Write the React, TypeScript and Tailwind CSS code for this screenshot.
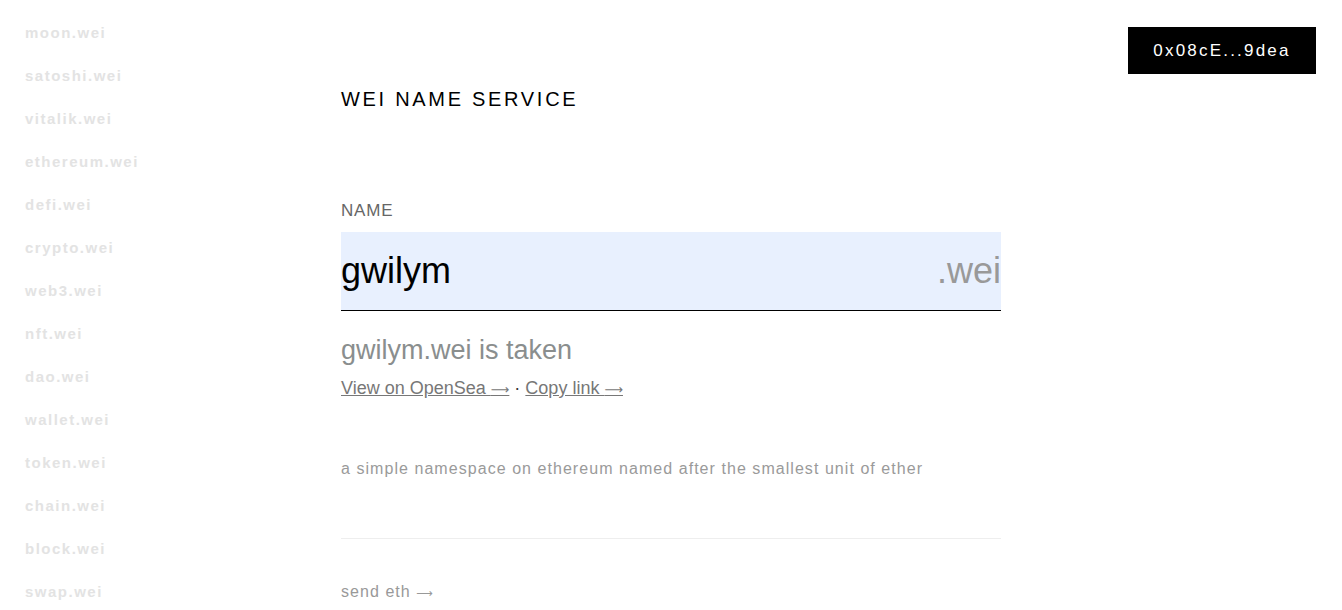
import React from "react";

const names = [
  "moon.wei",
  "satoshi.wei",
  "vitalik.wei",
  "ethereum.wei",
  "defi.wei",
  "crypto.wei",
  "web3.wei",
  "nft.wei",
  "dao.wei",
  "wallet.wei",
  "token.wei",
  "chain.wei",
  "block.wei",
  "swap.wei",
];

function Arrow() {
  return (
    <span
      className="text-[0.72em]"
      style={{ fontFamily: '"DejaVu Sans", sans-serif' }}
    >
      ⟶
    </span>
  );
}

export default function App() {
  return (
    <div
      className="relative flex h-[610px] w-full overflow-hidden bg-white"
      style={{ fontFamily: '"Liberation Sans", Arial, sans-serif' }}
    >
      <aside className="flex w-[341px] shrink-0 flex-col pl-[25px] pt-[12px]">
        {names.map((n) => (
          <div
            key={n}
            className="flex h-[43px] shrink-0 items-center text-[15px] font-bold tracking-[1.5px] text-[#e3e3e3]"
          >
            {n}
          </div>
        ))}
      </aside>

      <main className="flex w-[660px] shrink-0 flex-col pt-[87px]">
        <h1 className="text-[20px] leading-[24px] tracking-[2.7px] text-black">
          WEI NAME SERVICE
        </h1>
        <div className="mt-[90px] text-[17px] leading-[20px] tracking-[0.8px] text-[#666]">
          NAME
        </div>
        <div className="mt-[11px] box-border flex h-[79px] shrink-0 items-center justify-between border-b border-black bg-[#e8f0fe]">
          <span className="text-[36px] leading-[40px] text-black">gwilym</span>
          <span className="text-[36px] leading-[40px] text-[#999]">.wei</span>
        </div>
        <div className="mt-[23px] text-[27px] leading-[32px] text-[#8a8e8e]">
          gwilym.wei is taken
        </div>
        <div className="mt-[11px] text-[18px] leading-[22px] text-[#777]">
          <a className="underline">
            View on OpenSea <Arrow />
          </a>
          <span className="text-[#333]"> · </span>
          <a className="underline">
            Copy link <Arrow />
          </a>
        </div>
        <p className="mt-[58px] text-[16px] leading-[20px] tracking-[1.05px] text-[#9a9a9a]">
          a simple namespace on ethereum named after the smallest unit of ether
        </p>
        <div className="mt-[59px] h-px w-full shrink-0 bg-[#eeeeee]" />
        <div className="mt-[43px] text-[16px] leading-[20px] tracking-[1.05px] text-[#999]">
          send eth <Arrow />
        </div>
      </main>

      <button className="absolute right-[26px] top-[27px] flex h-[47px] w-[188px] items-center justify-center bg-black text-[17px] tracking-[2.2px] text-white">
        0x08cE...9dea
      </button>
    </div>
  );
}
